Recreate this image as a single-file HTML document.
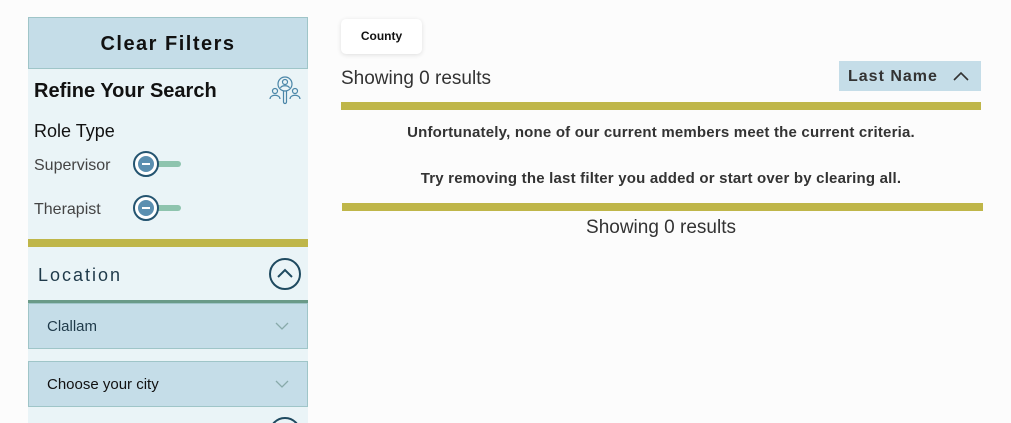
<!DOCTYPE html>
<html><head><style>
*{box-sizing:border-box;margin:0;padding:0}
html,body{width:1011px;height:423px;overflow:hidden}
body{background:#fcfcfc;font-family:"Liberation Sans",sans-serif;color:#222;position:relative}
.a{position:absolute}
.box{background:#c5dde8;border:1px solid #9fc5c8}
.tog{position:absolute;width:50px;height:26px}
.tog .bar{position:absolute;left:14px;top:10px;width:34px;height:6px;border-radius:3px;background:#8ec4ae}
.tog .c{position:absolute;left:0;top:0;width:26px;height:26px;border-radius:50%;border:2px solid #245470;background:#fff}
.tog .c i{position:absolute;left:3px;top:3px;width:16px;height:16px;border-radius:50%;background:#5b8fb0}
.tog .c i:after{content:"";position:absolute;left:4px;top:7px;width:8px;height:2px;background:#fff}
</style></head><body>
<div class="a box" style="left:28px;top:17px;width:280px;height:52px;text-align:center;line-height:52px;font-size:20px;font-weight:bold;letter-spacing:1.5px;color:#111">Clear Filters</div>
<div class="a" style="left:28px;top:69px;width:280px;height:170px;background:#eaf4f7"></div>
<div class="a" style="left:34px;top:80px;font-size:20px;font-weight:bold;color:#111">Refine Your Search</div>
<svg class="a" style="left:268px;top:75px" width="34" height="32" viewBox="0 0 34 32" fill="none" stroke="#4a86a8" stroke-width="1.2"><circle cx="17" cy="9" r="7"/><circle cx="17" cy="7" r="2.5"/><path d="M12.5 13c1-3 8-3 9 0"/><path d="M15.5 16v11a1.5 1.5 0 003 0V16"/><circle cx="7" cy="16" r="2.5"/><path d="M2 24c0-5 10-5 10 0"/><circle cx="27" cy="16" r="2.5"/><path d="M22 24c0-5 10-5 10 0"/></svg>
<div class="a" style="left:34px;top:121px;font-size:18px;color:#111">Role Type</div>
<div class="a" style="left:34px;top:157px;font-size:16px;color:#444">Supervisor</div>
<div class="tog" style="left:133px;top:151px"><div class="bar"></div><div class="c"><i></i></div></div>
<div class="a" style="left:34px;top:201px;font-size:16px;color:#444">Therapist</div>
<div class="tog" style="left:133px;top:195px"><div class="bar"></div><div class="c"><i></i></div></div>
<div class="a" style="left:28px;top:239px;width:280px;height:8px;background:#bfb649"></div>
<div class="a" style="left:28px;top:247px;width:280px;height:53px;background:#eaf4f7"></div>
<div class="a" style="left:38px;top:265px;font-size:18px;letter-spacing:2px;color:#1f3a4a">Location</div>
<div class="a" style="left:269px;top:258px;width:32px;height:32px;border-radius:50%;border:2px solid #1f4a60"></div>
<svg class="a" style="left:276px;top:266px" width="18" height="14"><path d="M2 11l7-7 7 7" fill="none" stroke="#1f4a60" stroke-width="2"/></svg>
<div class="a" style="left:28px;top:300px;width:280px;height:3px;background:#6a9a88"></div>
<div class="a box" style="left:28px;top:303px;width:280px;height:46px"></div>
<div class="a" style="left:47px;top:318px;font-size:15px;color:#1f3a4a">Clallam</div>
<div class="a" style="left:28px;top:349px;width:280px;height:12px;background:#eaf4f7"></div>
<div class="a box" style="left:28px;top:361px;width:280px;height:46px"></div>
<div class="a" style="left:47px;top:376px;font-size:15px;color:#111">Choose your city</div>
<svg class="a" style="left:274px;top:321px" width="16" height="10"><path d="M2 2l6 6 6-6" fill="none" stroke="#8aa" stroke-width="1.3"/></svg>
<svg class="a" style="left:274px;top:379px" width="16" height="10"><path d="M2 2l6 6 6-6" fill="none" stroke="#8aa" stroke-width="1.3"/></svg>
<div class="a" style="left:28px;top:407px;width:280px;height:16px;background:#eaf4f7;overflow:hidden"><div class="a" style="left:241px;top:10px;width:32px;height:32px;border-radius:50%;border:2px solid #1f4a60"></div></div>

<div class="a" style="left:341px;top:19px;width:81px;height:35px;background:#fff;border-radius:5px;box-shadow:0 1px 5px rgba(0,0,0,.12);font-size:12px;font-weight:bold;text-align:center;line-height:34px;color:#111">County</div>
<div class="a" style="left:341px;top:68px;font-size:19px;color:#333">Showing 0 results</div>
<div class="a" style="left:839px;top:61px;width:142px;height:30px;background:#c5dde8"></div>
<div class="a" style="left:848px;top:68px;font-size:16px;font-weight:bold;letter-spacing:1px;color:#333">Last Name</div>
<svg class="a" style="left:952px;top:70px" width="18" height="12"><path d="M2 10l7-7 7 7" fill="none" stroke="#333" stroke-width="1.6"/></svg>
<div class="a" style="left:341px;top:102px;width:640px;height:8px;background:#bfb649"></div>
<div class="a" style="left:341px;top:124px;width:640px;text-align:center;font-size:15px;font-weight:bold;color:#333;letter-spacing:0.2px">Unfortunately, none of our current members meet the current criteria.</div>
<div class="a" style="left:341px;top:170px;width:640px;text-align:center;font-size:15px;font-weight:bold;color:#333;letter-spacing:0.2px">Try removing the last filter you added or start over by clearing all.</div>
<div class="a" style="left:342px;top:203px;width:641px;height:8px;background:#bfb649"></div>
<div class="a" style="left:341px;top:217px;width:640px;text-align:center;font-size:19px;color:#333">Showing 0 results</div>
</body></html>
